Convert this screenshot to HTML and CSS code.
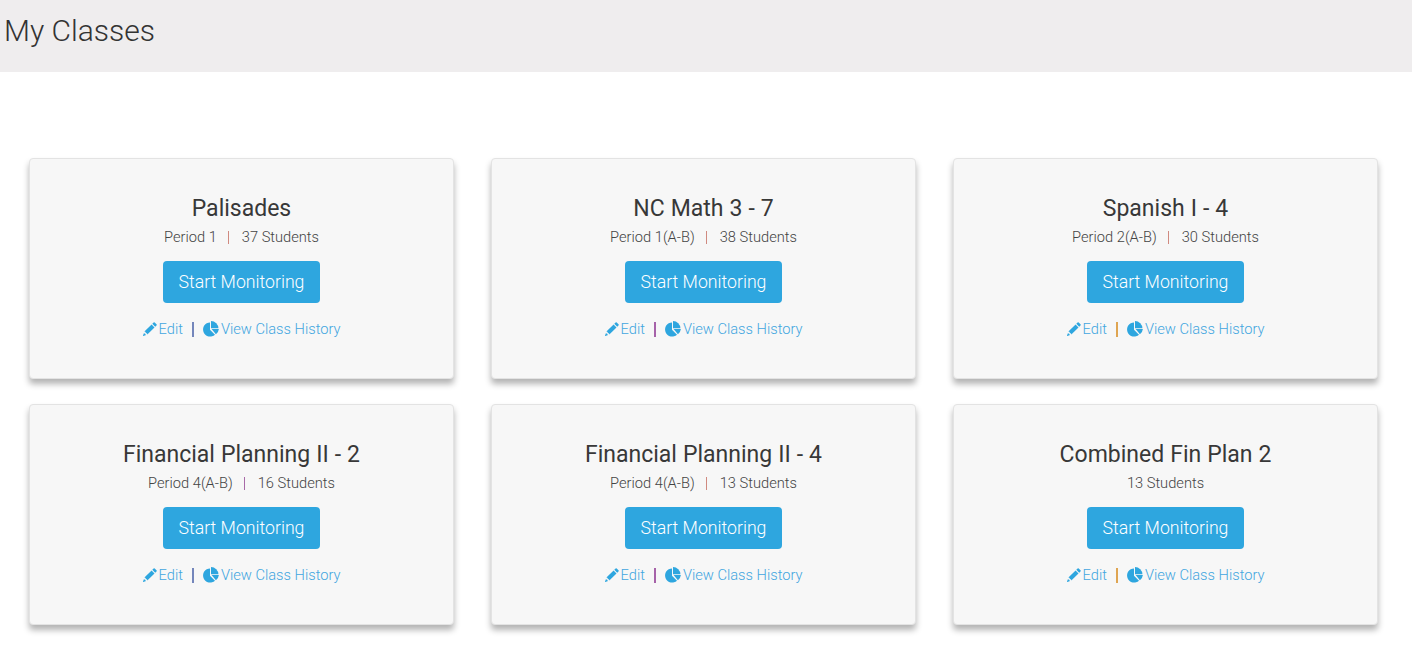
FILE: index.html
```html
<!DOCTYPE html>
<html lang="en">
<head>
<meta charset="utf-8">
<title>My Classes</title>
<link rel="stylesheet" href="styles.css">
</head>
<body>
<svg class="defs" width="0" height="0" aria-hidden="true">
  <symbol id="i-pencil" viewBox="0 0 14 14"><path d="M10.6.5a.8.8 0 0 1 1.1 0l1.8 1.8a.8.8 0 0 1 0 1.1l-1.3 1.3-2.9-2.9zM8.6 2.5l2.9 2.9-7.2 7.2-.3-1.4H2.7v-1.3l-1.3-.3zM1 10.9l2.1 2.1-2.7.9a.3.3 0 0 1-.4-.4z"/></symbol>
  <symbol id="i-pie" viewBox="0 0 16 16"><path d="M7 1.4V8.7l5 5A7.1 7.1 0 1 1 7 1.4z"/><path d="M8 0a7.4 7.4 0 0 1 7.4 7.3H8z"/><path d="M8.6 8.1h7.3a7.4 7.4 0 0 1-3 5.2z"/></symbol>
</svg>
<header class="topbar"><h1 class="page-title">My Classes</h1></header>
<main class="grid">
  <article class="card">
    <h2 class="card-title">Palisades</h2>
    <p class="meta">Period 1<span class="sep sep-red"></span>37 Students</p>
    <button class="btn" type="button">Start Monitoring</button>
    <div class="links"><a class="link" href="#"><svg class="ico-pencil"><use href="#i-pencil"/></svg>Edit</a><span class="bar bar-blue"></span><a class="link" href="#"><svg class="ico-pie"><use href="#i-pie"/></svg>View Class History</a></div>
  </article>
  <article class="card">
    <h2 class="card-title">NC Math 3 - 7</h2>
    <p class="meta">Period 1(A-B)<span class="sep sep-red"></span>38 Students</p>
    <button class="btn" type="button">Start Monitoring</button>
    <div class="links"><a class="link" href="#"><svg class="ico-pencil"><use href="#i-pencil"/></svg>Edit</a><span class="bar bar-purple"></span><a class="link" href="#"><svg class="ico-pie"><use href="#i-pie"/></svg>View Class History</a></div>
  </article>
  <article class="card">
    <h2 class="card-title">Spanish I - 4</h2>
    <p class="meta">Period 2(A-B)<span class="sep sep-red"></span>30 Students</p>
    <button class="btn" type="button">Start Monitoring</button>
    <div class="links"><a class="link" href="#"><svg class="ico-pencil"><use href="#i-pencil"/></svg>Edit</a><span class="bar bar-orange"></span><a class="link" href="#"><svg class="ico-pie"><use href="#i-pie"/></svg>View Class History</a></div>
  </article>
  <article class="card">
    <h2 class="card-title">Financial Planning II - 2</h2>
    <p class="meta">Period 4(A-B)<span class="sep sep-purple"></span>16 Students</p>
    <button class="btn" type="button">Start Monitoring</button>
    <div class="links"><a class="link" href="#"><svg class="ico-pencil"><use href="#i-pencil"/></svg>Edit</a><span class="bar bar-blue"></span><a class="link" href="#"><svg class="ico-pie"><use href="#i-pie"/></svg>View Class History</a></div>
  </article>
  <article class="card">
    <h2 class="card-title">Financial Planning II - 4</h2>
    <p class="meta">Period 4(A-B)<span class="sep sep-red"></span>13 Students</p>
    <button class="btn" type="button">Start Monitoring</button>
    <div class="links"><a class="link" href="#"><svg class="ico-pencil"><use href="#i-pencil"/></svg>Edit</a><span class="bar bar-purple"></span><a class="link" href="#"><svg class="ico-pie"><use href="#i-pie"/></svg>View Class History</a></div>
  </article>
  <article class="card">
    <h2 class="card-title">Combined Fin Plan 2</h2>
    <p class="meta">13 Students</p>
    <button class="btn" type="button">Start Monitoring</button>
    <div class="links"><a class="link" href="#"><svg class="ico-pencil"><use href="#i-pencil"/></svg>Edit</a><span class="bar bar-orange"></span><a class="link" href="#"><svg class="ico-pie"><use href="#i-pie"/></svg>View Class History</a></div>
  </article>
</main>
</body>
</html>
```
FILE: styles.css
```css
* { box-sizing: border-box; }
html, body { margin: 0; padding: 0; }
body { background: #fff; color: #333; font-family: Roboto, "Liberation Sans", sans-serif; font-weight: 300; }
.defs { position: absolute; }
.topbar { height: 72px; background: #efedee; padding: 13px 0 0 4px; }
.page-title { margin: 0; font-size: 30px; line-height: 36px; font-weight: 300; color: #333; }
.grid { display: grid; grid-template-columns: repeat(3, 425px); column-gap: 37px; row-gap: 25px; padding: 86px 0 46px 29px; }
.card { height: 221px; background: #f7f7f7; border: 1px solid #e3e3e3; border-radius: 4px; box-shadow: 0 5px 6px rgba(0, 0, 0, 0.3); display: flex; flex-direction: column; align-items: center; padding-top: 34px; }
.card-title { margin: 0; font-size: 23px; word-spacing: 0.3px; line-height: 32px; font-weight: 400; color: #383838; }
.meta { margin: 2px 0 0; font-size: 14.67px; line-height: 20px; color: #444; }
.sep { display: inline-block; width: 1px; height: 13px; margin: 0 13px 0 11px; vertical-align: -2px; }
.sep-red { background: #d08a80; }
.sep-purple { background: #a86aa8; }
.btn { margin-top: 14px; width: 157.5px; height: 42px; border: 0; border-radius: 4px; background: #2ea6df; color: #fff; font-family: inherit; font-weight: 300; font-size: 17.7px; padding: 0; }
.links { margin-top: 16px; display: flex; align-items: center; height: 20px; font-size: 14.67px; }
.link { display: flex; align-items: center; color: #42a6e0; text-decoration: none; }
.link svg { fill: #2ea6df; }
.ico-pencil { width: 14px; height: 14px; margin-right: 2px; }
.ico-pie { width: 16px; height: 16px; margin-right: 2px; }
.bar { width: 2px; height: 15px; margin: 0 9px; }
.bar-blue { background: #7486bb; }
.bar-purple { background: #a662a9; }
.bar-orange { background: #dfa552; }
```
